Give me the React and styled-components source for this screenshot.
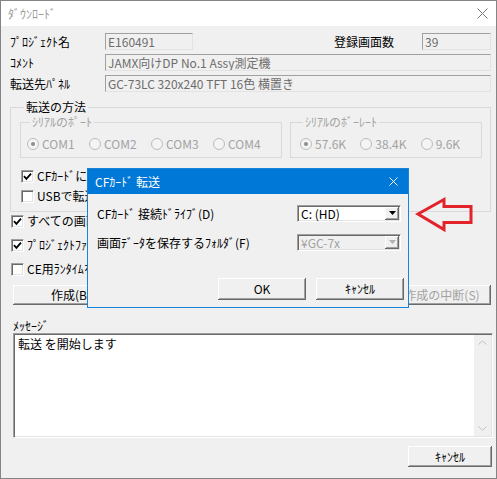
import React from 'react';
import styled, { createGlobalStyle } from 'styled-components';

const Global = createGlobalStyle`
  html, body { margin: 0; padding: 0; background: #fff; }
  body {
    font-family: "Noto Sans CJK JP", "Noto Sans", sans-serif;
    font-size: 12px;
    line-height: 14px;
    color: #000;
  }
  * { box-sizing: border-box; }
`;

const Window = styled.div`
  position: relative;
  width: 497px;
  height: 479px;
  border: 1px solid #858585;
  background: #f0f0f0;
  display: flex;
  flex-direction: column;
  overflow: hidden;
`;

const TitleBar = styled.div`
  height: 25px;
  flex: none;
  background: #fff;
  display: flex;
  align-items: center;
  justify-content: space-between;
  padding: 0 8px 0 7px;
  color: #9a9a9a;
`;

const Body = styled.div`
  flex: 1;
  display: flex;
  flex-direction: column;
  padding: 7px 5px 0 9px;
`;

const Header = styled.div`
  display: flex;
  flex-direction: column;
  gap: 4px;
`;

const FieldRow = styled.div`
  display: flex;
  align-items: center;
  height: 17px;
`;

const RowLabel = styled.span`
  width: ${p => p.$w}px;
  flex: none;
  white-space: nowrap;
`;

const Spacer = styled.span`
  flex: 1;
`;

const ReadOnlyField = styled.div`
  width: ${p => (p.$w ? `${p.$w}px` : 'auto')};
  flex: ${p => (p.$w ? 'none' : '1')};
  height: 17px;
  border: 1px solid;
  border-color: #a0a0a0 #e3e3e3 #e3e3e3 #a0a0a0;
  padding-left: 2px;
  color: #6d6d6d;
  line-height: 15px;
  white-space: nowrap;
  overflow: hidden;
`;

const GroupBox = styled.fieldset`
  margin: ${p => (p.$inner ? '0' : '8px 0 0')};
  padding: ${p => p.$pad};
  border: 1px solid #d9d9d9;
  min-width: 0;
  width: ${p => (p.$w ? `${p.$w}px` : 'auto')};
  flex: none;
`;

const GroupLegend = styled.legend`
  padding: 0 2px;
  margin-left: ${p => (p.$inner ? 3 : 4)}px;
  line-height: 14px;
  color: ${p => (p.$disabled ? '#a3a3a3' : '#000')};
  white-space: nowrap;
`;

const InnerGroups = styled.div`
  display: flex;
  gap: 8px;
`;

const RadioRow = styled.div`
  display: flex;
  height: 14px;
`;

const RadioItem = styled.label`
  display: flex;
  align-items: center;
  gap: 3px;
  width: ${p => p.$w}px;
  height: 14px;
  color: #a3a3a3;
  white-space: nowrap;
`;

const RadioDot = styled.span`
  width: 12px;
  height: 12px;
  border-radius: 50%;
  border: 1px solid #bcbcbc;
  background: #f4f4f4;
  display: flex;
  align-items: center;
  justify-content: center;
  &::after {
    content: '';
    width: 4px;
    height: 4px;
    border-radius: 50%;
    background: ${p => (p.$on ? '#8c8c8c' : 'transparent')};
  }
`;

const CheckList = styled.div`
  display: flex;
  flex-direction: column;
  margin-top: ${p => p.$mt}px;
  gap: ${p => p.$gap}px;
`;

const CheckRow = styled.label`
  display: flex;
  align-items: center;
  gap: 3px;
  height: ${p => p.$h}px;
  padding-left: 1px;
  white-space: nowrap;
  overflow: hidden;
`;

const CheckBox = styled.span`
  width: 13px;
  height: 13px;
  flex: none;
  border: 1px solid;
  border-color: #a0a0a0 #fff #fff #a0a0a0;
  box-shadow: inset 1px 1px #696969, inset -1px -1px #e3e3e3;
  background: #fff;
  display: flex;
  align-items: center;
  justify-content: center;
`;

const ActionRow = styled.div`
  display: flex;
  justify-content: space-between;
  margin-top: 9px;
  padding-left: 3px;
`;

const Btn = styled.button`
  width: ${p => p.$w}px;
  height: ${p => p.$h}px;
  flex: none;
  font: inherit;
  line-height: 14px;
  background: #f0f0f0;
  border: none;
  padding: 0;
  box-shadow: inset -1px -1px #696969, inset 1px 1px #fff, inset -2px -2px #a0a0a0,
    inset 2px 2px #f0f0f0;
  color: ${p => (p.$disabled ? '#a3a3a3' : '#000')};
  white-space: nowrap;
`;

const MessageLabel = styled.div`
  margin: 14px 0 0 3px;
  height: 14px;
`;

const MessageBox = styled.div`
  display: flex;
  height: 105px;
  margin: 0 -2px 0 3px;
  background: #fff;
  border: 1px solid;
  border-color: #a0a0a0 #fff #fff #a0a0a0;
  box-shadow: inset 1px 1px #696969, inset -1px -1px #e3e3e3;
`;

const MessageText = styled.div`
  flex: 1;
  padding: 3px 0 0 4px;
`;

const ScrollBar = styled.div`
  width: 17px;
  margin: 1px 1px 1px 0;
  background: #f0f0f0;
  display: flex;
  flex-direction: column;
  justify-content: space-between;
  align-items: center;
  padding: 5px 0;
`;

const BottomRow = styled.div`
  display: flex;
  justify-content: flex-end;
  margin: 8px -1px 0 0;
`;

const Dialog = styled.div`
  position: absolute;
  left: 86px;
  top: 167px;
  width: 322px;
  height: 140px;
  border: 1px solid #1883d7;
  background: #f0f0f0;
  display: flex;
  flex-direction: column;
`;

const DialogTitle = styled.div`
  height: 25px;
  flex: none;
  background: #0078d7;
  color: #fff;
  display: flex;
  align-items: center;
  justify-content: space-between;
  padding: 0 10px 0 7px;
`;

const DialogBody = styled.div`
  flex: 1;
  display: flex;
  flex-direction: column;
  padding: 11px 7px 7px 9px;
`;

const DialogRows = styled.div`
  display: flex;
  flex-direction: column;
  gap: 12px;
`;

const DialogRow = styled.div`
  display: flex;
  align-items: center;
  justify-content: space-between;
  height: 17px;
  white-space: nowrap;
`;

const Combo = styled.div`
  width: 104px;
  height: 17px;
  display: flex;
  background: ${p => (p.$disabled ? '#f0f0f0' : '#fff')};
  border: 1px solid;
  border-color: #a0a0a0 #fff #fff #a0a0a0;
  box-shadow: inset 1px 1px #696969, inset -1px -1px #e3e3e3;
  color: ${p => (p.$disabled ? '#a3a3a3' : '#000')};
  padding: 1px 1px 1px 1px;
`;

const ComboText = styled.span`
  flex: 1;
  padding-left: 2px;
  line-height: 13px;
  white-space: nowrap;
`;

const ComboButton = styled.span`
  width: 14px;
  height: 13px;
  background: #f0f0f0;
  box-shadow: inset -1px -1px #696969, inset 1px 1px #fff, inset -2px -2px #a0a0a0;
  display: flex;
  align-items: center;
  justify-content: center;
  padding-bottom: 1px;
`;

const DialogButtons = styled.div`
  display: flex;
  justify-content: flex-end;
  gap: 10px;
  margin: auto -3px 0 0;
`;

const Arrow = styled.svg`
  position: absolute;
  left: 413px;
  top: 195px;
`;

const Check = () => (
  <svg width="9" height="9" viewBox="0 0 9 9">
    <polyline points="1,4.2 3.4,6.8 8,1.6" fill="none" stroke="#000" strokeWidth="1.8" />
  </svg>
);

const Triangle = ({ color }) => (
  <svg width="7" height="4" viewBox="0 0 7 4">
    <polygon points="0,0 7,0 3.5,4" fill={color} />
  </svg>
);

const Chevron = ({ up }) => (
  <svg width="9" height="5" viewBox="0 0 9 5">
    <polyline
      points={up ? '0.5,4.5 4.5,0.8 8.5,4.5' : '0.5,0.5 4.5,4.2 8.5,0.5'}
      fill="none"
      stroke="#c0c0c0"
      strokeWidth="1"
    />
  </svg>
);

const CloseX = ({ color, size }) => (
  <svg width={size} height={size} viewBox={`0 0 ${size} ${size}`}>
    <line x1="0.5" y1="0.5" x2={size - 0.5} y2={size - 0.5} stroke={color} strokeWidth="1" />
    <line x1={size - 0.5} y1="0.5" x2="0.5" y2={size - 0.5} stroke={color} strokeWidth="1" />
  </svg>
);

const ports = ['COM1', 'COM2', 'COM3', 'COM4'];
const rates = ['57.6K', '38.4K', '9.6K'];

export default function App() {
  return (
    <>
      <Global />
      <Window>
        <TitleBar>
          <span>ﾀﾞｳﾝﾛｰﾄﾞ</span>
          <CloseX color="#7a7a7a" size={11} />
        </TitleBar>
        <Body>
          <Header>
            <FieldRow>
              <RowLabel $w={95}>ﾌﾟﾛｼﾞｪｸﾄ名</RowLabel>
              <ReadOnlyField $w={88}>E160491</ReadOnlyField>
              <Spacer />
              <RowLabel $w={88}>登録画面数</RowLabel>
              <ReadOnlyField $w={69}>39</ReadOnlyField>
            </FieldRow>
            <FieldRow>
              <RowLabel $w={95}>ｺﾒﾝﾄ</RowLabel>
              <ReadOnlyField>JAMX向けDP No.1 Assy測定機</ReadOnlyField>
            </FieldRow>
            <FieldRow>
              <RowLabel $w={95}>転送先ﾊﾟﾈﾙ</RowLabel>
              <ReadOnlyField>GC-73LC 320x240 TFT 16色 横置き</ReadOnlyField>
            </FieldRow>
          </Header>

          <GroupBox $pad="1px 8px 5px 9px">
            <GroupLegend>転送の方法</GroupLegend>
            <InnerGroups>
              <GroupBox $inner $w={262} $pad="8px 0 6px 6px">
                <GroupLegend $inner $disabled>ｼﾘｱﾙのﾎﾟｰﾄ</GroupLegend>
                <RadioRow>
                  {ports.map((p, i) => (
                    <RadioItem key={p} $w={62}>
                      <RadioDot $on={i === 0} />
                      {p}
                    </RadioItem>
                  ))}
                </RadioRow>
              </GroupBox>
              <GroupBox $inner $w={192} $pad="8px 0 6px 9px">
                <GroupLegend $inner $disabled>ｼﾘｱﾙのﾎﾞｰﾚｰﾄ</GroupLegend>
                <RadioRow>
                  {rates.map((r, i) => (
                    <RadioItem key={r} $w={61}>
                      <RadioDot $on={i === 0} />
                      {r}
                    </RadioItem>
                  ))}
                </RadioRow>
              </GroupBox>
            </InnerGroups>
            <CheckList $mt={8} $gap={0}>
              <CheckRow $h={20}>
                <CheckBox><Check /></CheckBox>
                CFｶｰﾄﾞに転送
              </CheckRow>
              <CheckRow $h={20}>
                <CheckBox />
                USBで転送
              </CheckRow>
            </CheckList>
          </GroupBox>

          <CheckList $mt={2} $gap={10}>
            <CheckRow $h={14}>
              <CheckBox><Check /></CheckBox>
              すべての画面を転送
            </CheckRow>
            <CheckRow $h={14}>
              <CheckBox><Check /></CheckBox>
              ﾌﾟﾛｼﾞｪｸﾄﾌｧｲﾙを転送
            </CheckRow>
            <CheckRow $h={14}>
              <CheckBox />
              CE用ﾗﾝﾀｲﾑを転送
            </CheckRow>
          </CheckList>

          <ActionRow>
            <Btn $w={116} $h={20}>作成(B)</Btn>
            <Btn $w={98} $h={20} $disabled>作成の中断(S)</Btn>
          </ActionRow>

          <MessageLabel>ﾒｯｾｰｼﾞ</MessageLabel>
          <MessageBox>
            <MessageText>転送 を開始します</MessageText>
            <ScrollBar>
              <Chevron up />
              <Chevron />
            </ScrollBar>
          </MessageBox>

          <BottomRow>
            <Btn $w={84} $h={21}>ｷｬﾝｾﾙ</Btn>
          </BottomRow>
        </Body>

        <Dialog>
          <DialogTitle>
            <span>CFｶｰﾄﾞ 転送</span>
            <CloseX color="#fff" size={9} />
          </DialogTitle>
          <DialogBody>
            <DialogRows>
              <DialogRow>
                <span>CFｶｰﾄﾞ 接続ﾄﾞﾗｲﾌﾞ(D)</span>
                <Combo>
                  <ComboText>C: (HD)</ComboText>
                  <ComboButton><Triangle color="#000" /></ComboButton>
                </Combo>
              </DialogRow>
              <DialogRow>
                <span>画面ﾃﾞｰﾀを保存するﾌｫﾙﾀﾞ(F)</span>
                <Combo $disabled>
                  <ComboText>¥GC-7x</ComboText>
                  <ComboButton><Triangle color="#b0b0b0" /></ComboButton>
                </Combo>
              </DialogRow>
            </DialogRows>
            <DialogButtons>
              <Btn $w={88} $h={22}>OK</Btn>
              <Btn $w={88} $h={22}>ｷｬﾝｾﾙ</Btn>
            </DialogButtons>
          </DialogBody>
        </Dialog>

        <Arrow width="62" height="38" viewBox="0 0 62 38">
          <polygon
            points="4,18 30,3.5 30,10.5 57,10.5 57,26.5 30,26.5 30,33.5"
            fill="none"
            stroke="#e3232b"
            strokeWidth="3"
            strokeLinejoin="miter"
          />
        </Arrow>
      </Window>
    </>
  );
}
